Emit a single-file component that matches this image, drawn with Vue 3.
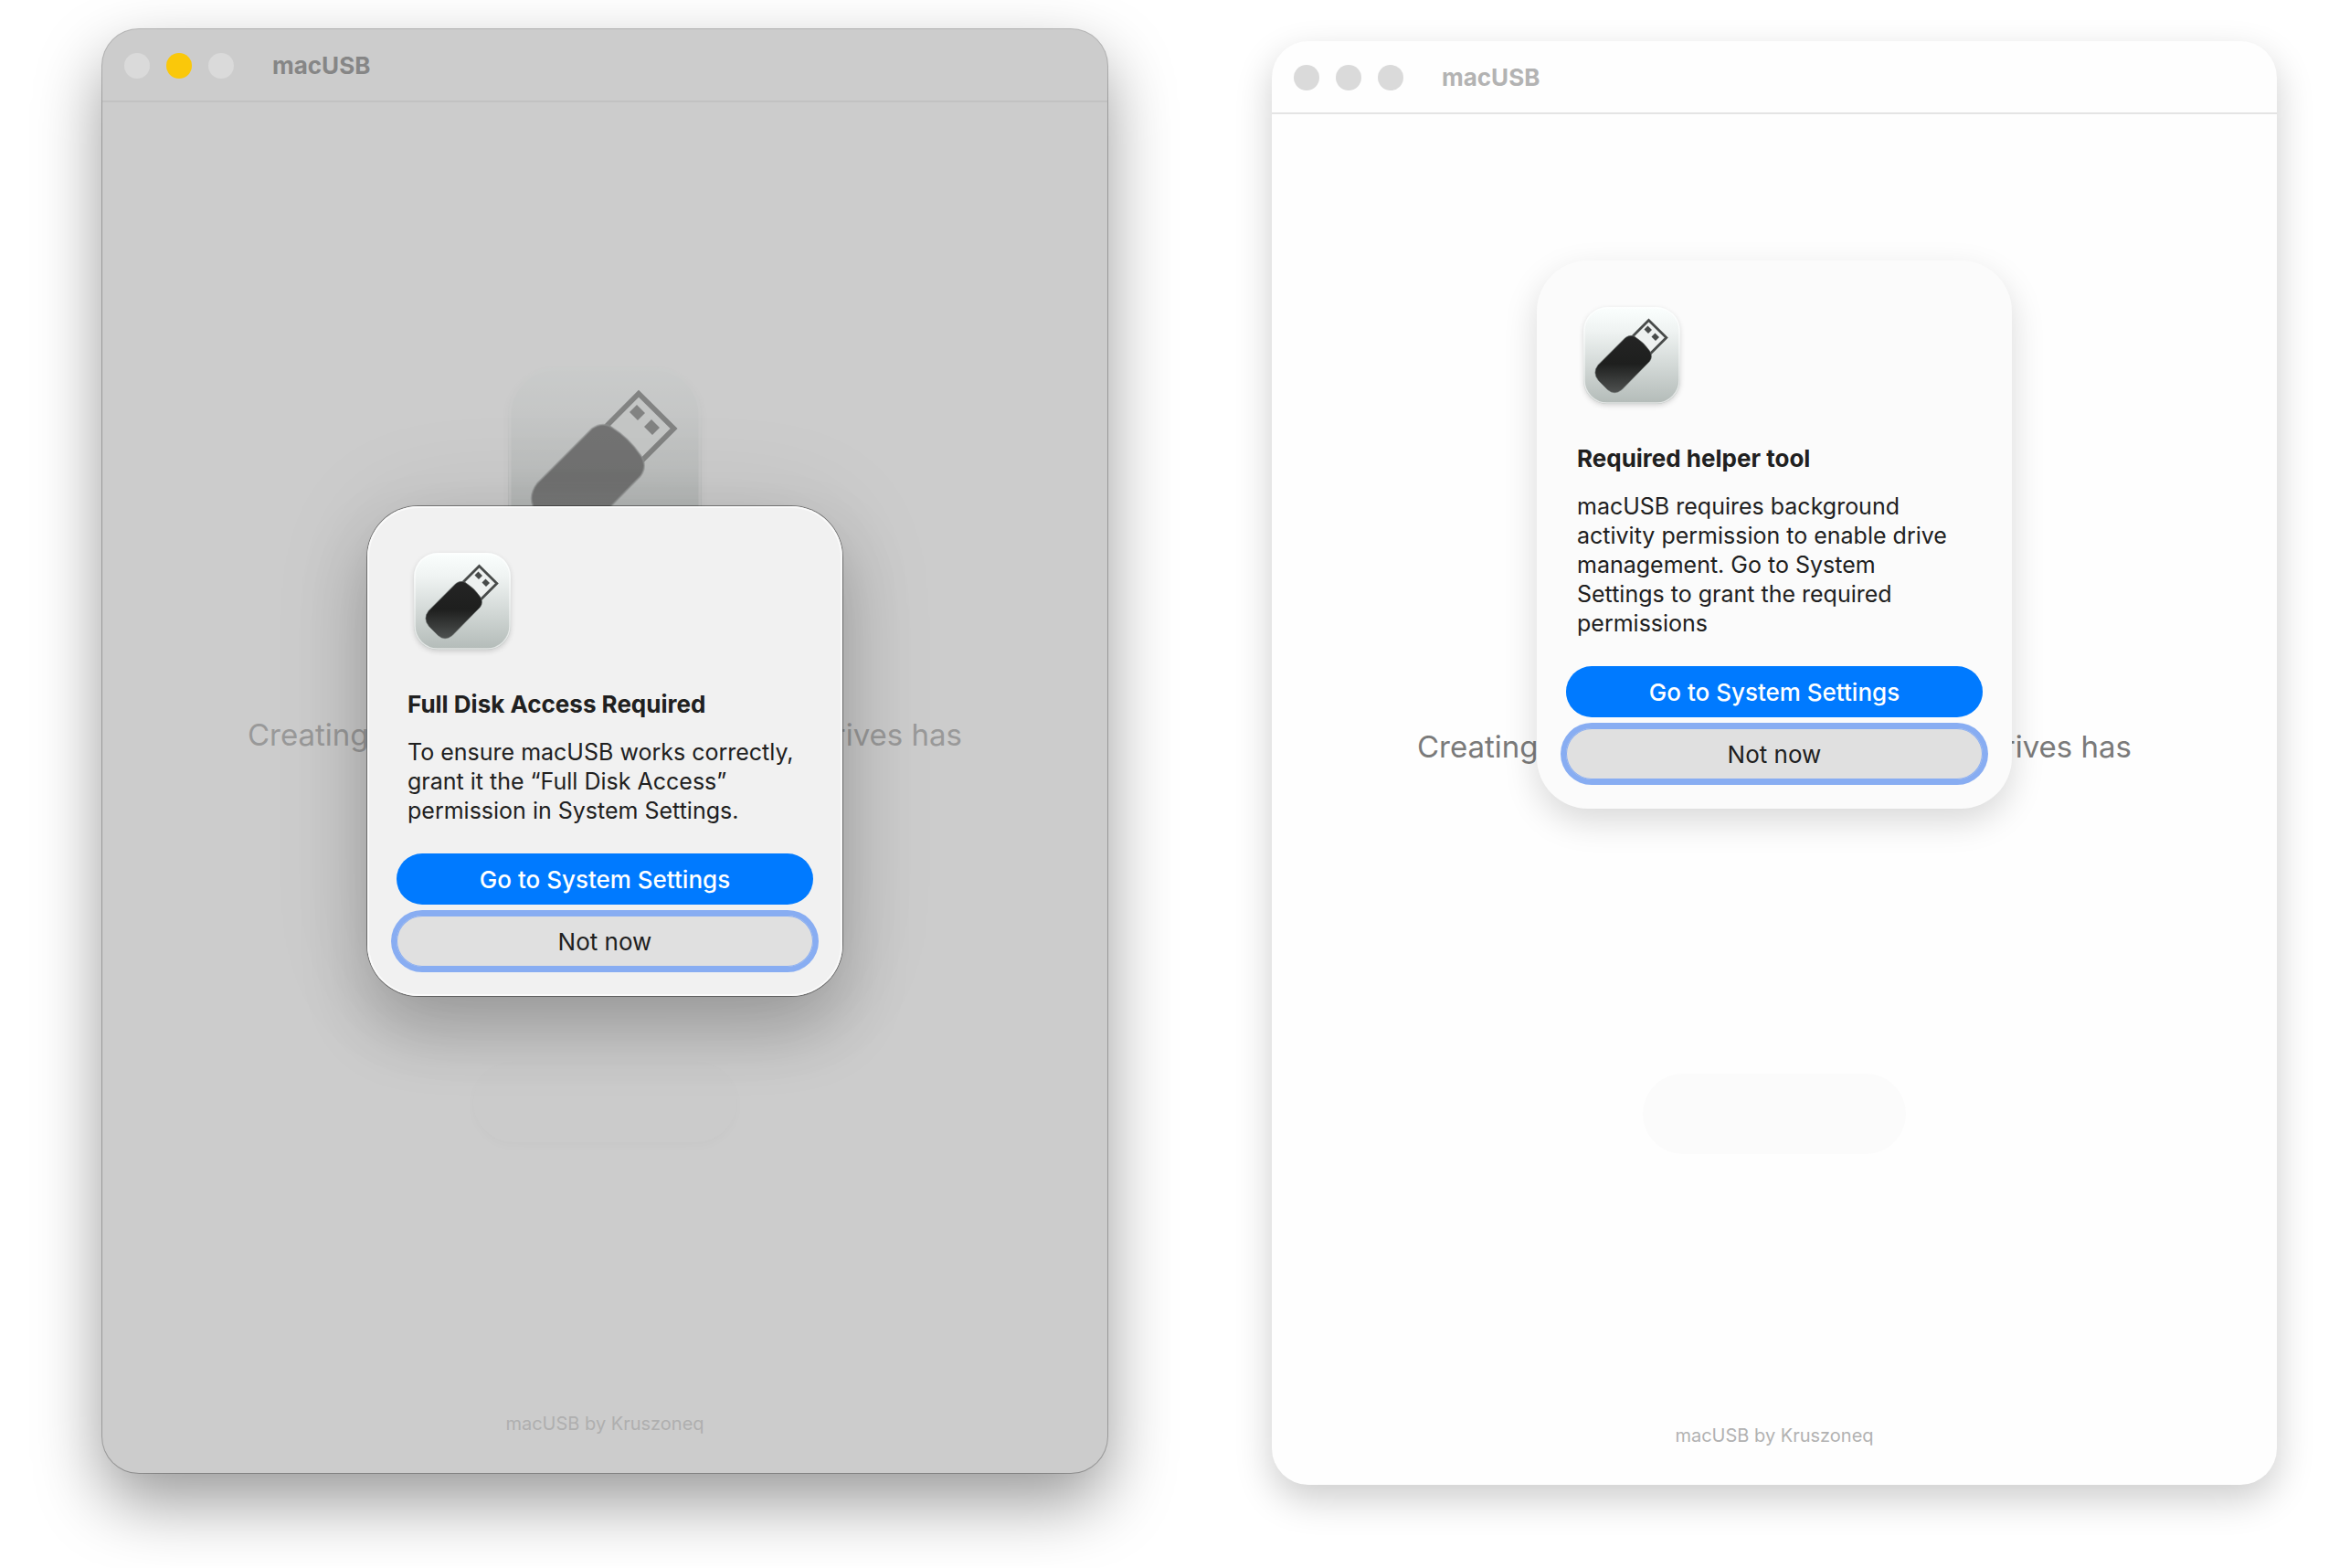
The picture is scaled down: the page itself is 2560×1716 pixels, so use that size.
<template>
    <div class="desktop">
        <section v-for="win in windows" :key="win.id" class="window" :class="win.id">
            <header class="titlebar">
                <button class="light" type="button" aria-label="Close"></button>
                <button class="light minimize" type="button" aria-label="Minimize"></button>
                <button class="light" type="button" aria-label="Zoom"></button>
                <h1>macUSB</h1>
            </header>

            <main class="content">
                <svg class="app-icon" viewBox="0 0 104 104" aria-hidden="true">
                    <use href="#usb-icon" />
                </svg>
                <p class="tagline">
                    <span>Creating</span>
                    <span>drives has</span>
                </p>
                <div class="start-pill"></div>
                <footer class="credits">macUSB by Kruszoneq</footer>
            </main>

            <div class="overlay">
                <div class="dialog" role="alertdialog" :aria-labelledby="win.id + '-title'">
                    <svg class="dialog-icon" viewBox="0 0 104 104" aria-hidden="true">
                        <use href="#usb-icon" />
                    </svg>
                    <h2 :id="win.id + '-title'">{{ win.title }}</h2>
                    <p class="message">
                        <template v-for="(line, i) in win.lines" :key="i">{{ line }}<br /></template>
                    </p>
                    <div class="actions">
                        <button class="btn primary" type="button">Go to System Settings</button>
                        <button class="btn focused" type="button">Not now</button>
                    </div>
                </div>
            </div>
        </section>

        <!-- Shared USB stick artwork -->
        <svg class="defs" aria-hidden="true">
            <defs>
                <linearGradient id="tile" x1="0" y1="0" x2="0" y2="1">
                    <stop offset="0" stop-color="#fbfffe" />
                    <stop offset="0.25" stop-color="#eff3f2" />
                    <stop offset="1" stop-color="#b3bbb8" />
                </linearGradient>
                <linearGradient id="stick" gradientUnits="userSpaceOnUse" x1="0" y1="30" x2="0" y2="92">
                    <stop offset="0" stop-color="#242424" />
                    <stop offset="0.5" stop-color="#1e1f1e" />
                    <stop offset="1" stop-color="#4d504f" />
                </linearGradient>
                <symbol id="usb-icon" viewBox="0 0 104 104" overflow="visible">
                    <rect x="-1" y="-1" width="106" height="106" rx="26" fill="url(#tile)" />
                    <rect x="0" y="0" width="104" height="104" rx="25" fill="none" stroke="#fff"
                        stroke-opacity="0.6" stroke-width="1.5" />
                    <path d="M53 31L70.500 13.400L89.800 32.500L72.300 50z" fill="#eef1f0" stroke="#484b4a"
                        stroke-width="2.800" />
                    <path d="M69.500 19.500l4.500 4.500-4 4-4.500-4.500zM77.500 27.500l4.500 4.500-4 4-4.500-4.500z" fill="#484b4a" />
                    <path d="M45 32.500Q51 28.500 56 32Q65 37.500 71.500 47Q75.500 53 71.500 58.500L41 89.500Q33 96 25.500 89.500L15.500 79.500Q8.500 71 15 62.500z"
                        fill="url(#stick)" stroke="#6d716f" stroke-opacity="0.6" stroke-width="1" />
                </symbol>
            </defs>
        </svg>
    </div>
</template>

<script setup>
const windows = [
    {
        id: "disk-access",
        title: "Full Disk Access Required",
        lines: [
            "To ensure macUSB works correctly,",
            "grant it the “Full Disk Access”",
            "permission in System Settings.",
        ],
    },
    {
        id: "helper-tool",
        title: "Required helper tool",
        lines: [
            "macUSB requires background",
            "activity permission to enable drive",
            "management. Go to System",
            "Settings to grant the required",
            "permissions",
        ],
    },
];
</script>

<style>
body {
    background: #fff;
}
</style>

<style scoped>
.desktop {
    display: grid;
    grid-template-columns: 1fr 1fr;
    min-height: 100vh;
    overflow: hidden;
    font-family: Inter, "Liberation Sans", sans-serif;
    color: #202020;
}

.defs {
    position: absolute;
    width: 0;
    height: 0;
}

/* --- Windows --- */
.window {
    position: relative;
    display: flex;
    flex-direction: column;
    border-radius: 40px;
}

.disk-access {
    margin: 32px 68px 104px 112px;
    background: #ccc;
    box-shadow: 0 0 0 1px rgba(0, 0, 0, 0.25), 0 32px 72px rgba(0, 0, 0, 0.4);
}

.helper-tool {
    margin: 45px 68px 91px 112px;
    background: #fefefe;
    box-shadow: 0 16px 40px rgba(0, 0, 0, 0.2);
}

.titlebar {
    display: flex;
    align-items: center;
    gap: 18px;
    height: 76px;
    padding: 2px 24px 0;
    border-bottom: 2px solid #e4e4e4;
}

.titlebar h1 {
    margin: 0 0 0 24px;
    font-size: 26px;
    font-weight: 700;
    line-height: 32px;
    color: #b3b3b3;
}

.light {
    width: 28px;
    height: 28px;
    padding: 0;
    border: none;
    border-radius: 50%;
    background: #dadada;
}

.disk-access .titlebar {
    border-color: #c2c2c2;
}

.disk-access .titlebar h1 {
    color: #868686;
}

.disk-access .minimize {
    background: #fac80a;
}

/* --- Window content --- */
.content {
    flex: 1;
    display: flex;
    flex-direction: column;
    align-items: center;
    padding: 292px 24px 40px;
}

.app-icon {
    width: 208px;
    height: 208px;
    border-radius: 50px;
    opacity: 0.5;
    overflow: visible;
    box-shadow: 0 0 0 4px rgba(255, 255, 255, 0.15), 0 4px 12px rgba(0, 0, 0, 0.1);
}

.disk-access .app-icon {
    filter: brightness(0.8);
}

.tagline {
    display: flex;
    justify-content: space-between;
    width: 782px;
    margin: 170px 0 0;
    font-size: 33px;
    line-height: 44px;
    color: #7a7a7a;
}

.disk-access .tagline {
    color: #999;
}

.start-pill {
    width: 288px;
    height: 88px;
    margin-top: 336px;
    border-radius: 44px;
    background: #fbfbfb;
}

.disk-access .start-pill {
    background: #cbcbcb;
    box-shadow: 0 4px 12px rgba(0, 0, 0, 0.02);
}

.credits {
    margin-top: auto;
    font-size: 20px;
    line-height: 28px;
    color: #b2b2b2;
}

.disk-access .credits {
    color: #afafaf;
}

/* --- Dialog --- */
.overlay {
    position: absolute;
    inset: 0;
    display: flex;
    justify-content: center;
    align-items: center;
}

.helper-tool .overlay {
    align-items: flex-start;
    padding-top: 240px;
}

.dialog {
    box-sizing: border-box;
    width: 520px;
    padding: 52px 32px 32px;
    border-radius: 56px;
    background: #fbfbfb;
    box-shadow: 0 14px 36px rgba(0, 0, 0, 0.15);
}

.disk-access .dialog {
    background: #f1f1f1;
    box-shadow: inset 0 0 0 2px #fafafa, 0 0 0 1px rgba(0, 0, 0, 0.4), 0 36px 72px rgba(0, 0, 0, 0.22),
        0 0 120px rgba(0, 0, 0, 0.08);
}

.dialog-icon {
    display: block;
    width: 104px;
    height: 104px;
    margin-left: 20px;
    border-radius: 25px;
    overflow: visible;
    box-shadow: 0 2px 6px rgba(0, 0, 0, 0.2);
}

.dialog h2 {
    margin: 45px 12px 0;
    font-size: 26px;
    font-weight: 700;
    line-height: 32px;
}

.message {
    margin: 20px 12px 0;
    font-size: 25px;
    line-height: 32px;
    white-space: nowrap;
}

.actions {
    display: flex;
    flex-direction: column;
    gap: 12px;
    margin-top: 31px;
}

.btn {
    height: 56px;
    border: none;
    border-radius: 28px;
    font-family: inherit;
    font-size: 26px;
    color: #202020;
}

.primary {
    background: #007aff;
    font-weight: 500;
    color: #fff;
}

.focused {
    background: #e0e0e0;
    box-shadow: 0 0 0 6px #88adf2, inset 0 0 0 1px #88adf2;
}
</style>
